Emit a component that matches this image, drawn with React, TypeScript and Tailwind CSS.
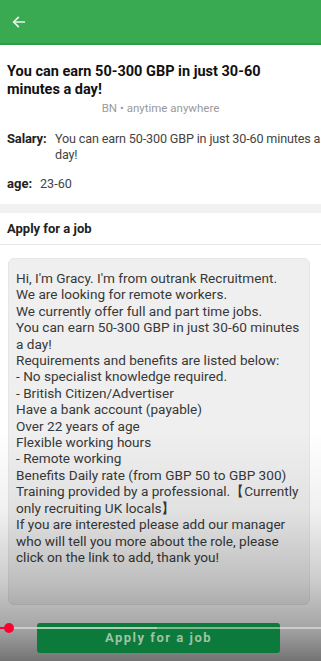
import React from "react";

const body = [
  "Hi, I'm Gracy. I'm from outrank Recruitment.",
  "We are looking for remote workers.",
  "We currently offer full and part time jobs.",
  "You can earn 50-300 GBP in just 30-60 minutes a day!",
  "Requirements and benefits are listed below:",
  "- No specialist knowledge required.",
  "- British Citizen/Advertiser",
  "Have a bank account (payable)",
  "Over 22 years of age",
  "Flexible working hours",
  "- Remote working",
  "Benefits Daily rate (from GBP 50 to GBP 300)",
  "Training provided by a professional.【Currently only recruiting UK locals】",
  "If you are interested please add our manager who will tell you more about the role, please click on the link to add, thank you!",
];

export default function App() {
  return (
    <div
      className="relative w-[321px] h-[661px] overflow-hidden bg-white text-[#222]"
      style={{ fontFamily: "Roboto, 'Noto Sans', Arial, sans-serif" }}
    >
      <div className="h-[45px] bg-[#39aa51] border-b-2 border-[#30994a] flex items-center pl-[11px]">
        <svg width="16" height="16" viewBox="0 0 24 24" fill="none" stroke="#e8f5ea" strokeWidth="2.6" strokeLinecap="round" strokeLinejoin="round">
          <path d="M20 12H4" />
          <path d="M11 5l-7 7 7 7" />
        </svg>
      </div>

      <div className="px-[7px] pt-[18px]">
        <div className="text-[14.5px] font-bold leading-[18px] text-[#111]">
          You can earn 50-300 GBP in just 30-60 minutes a day!
        </div>
        <div className="mt-[2px] text-center text-[11.5px] text-[#9a9a9a] leading-[14px]">
          BN • anytime anywhere
        </div>
        <div className="mt-[16px] -mr-[7px] flex text-[12.6px] leading-[16px] tracking-[-0.15px]">
          <span className="font-bold text-[#222] w-[48px] shrink-0 text-[13px]">Salary:</span>
          <span className="text-[#444]">You can earn 50-300 GBP in just 30-60 minutes a day!</span>
        </div>
        <div className="mt-[13px] flex text-[13px] leading-[16px]">
          <span className="font-bold text-[#222] w-[33px] shrink-0">age:</span>
          <span className="text-[#444] text-[12.6px]">23-60</span>
        </div>
      </div>

      <div className="mt-[12px] h-[9px] bg-[#f1f1f1]" />

      <div className="h-[32px] flex items-center px-[7px] border-b border-[#e8e8e8] text-[13px] font-bold text-[#222]">
        Apply for a job
      </div>

      <div className="ml-[8px] mt-[13px] w-[302px] h-[347px] rounded-[6px] bg-[#efefef] border border-[#e6e6e6] px-[7px] pt-[11px] text-[13.6px] leading-[16.4px] text-[#383838]">
        {body.map((l, i) => (
          <div key={i}>{l}</div>
        ))}
      </div>

      <div
        className="absolute inset-x-0 bottom-0 h-[230px] pointer-events-none flex flex-col justify-end"
        style={{
          background:
            "linear-gradient(to bottom, rgba(0,0,0,0) 0%, rgba(0,0,0,0.06) 35%, rgba(0,0,0,0.2) 65%, rgba(0,0,0,0.35) 85%, rgba(0,0,0,0.55) 100%)",
        }}
      >
        <div className="relative h-[38px] mb-[8px] pt-[8px]">
          <div className="ml-[37px] w-[243px] h-[30px] rounded-[3px] bg-[#0b7a3a] flex items-center justify-center text-[13px] font-bold tracking-[1.5px] text-[#9fc2a8]">
            Apply for a job
          </div>
          <div className="absolute inset-x-0 top-[12px] h-[2px] flex bg-[rgba(255,255,255,0.45)]">
            <div className="w-[9px] bg-[#ff0033]" />
            <div className="ml-[28px] w-[120px] bg-[rgba(255,255,255,0.35)]" />
          </div>
          <div className="absolute left-[4px] top-[8px] w-[10px] h-[10px] rounded-full bg-[#ff0033]" />
        </div>
      </div>
    </div>
  );
}
